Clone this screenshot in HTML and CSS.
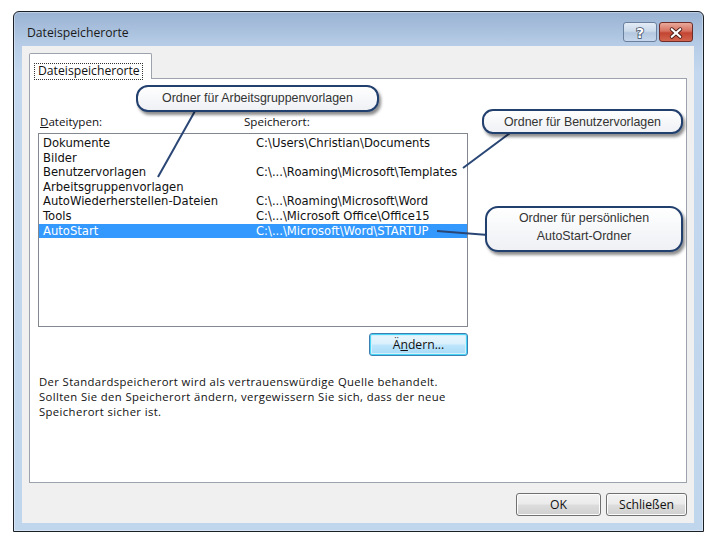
FILE: index.html
```html
<!DOCTYPE html>
<html lang="de">
<head>
<meta charset="utf-8">
<title>Dateispeicherorte</title>
<link rel="stylesheet" href="styles.css">
</head>
<body>
<div class="window">
  <div class="titlebar">
    <span class="title">Dateispeicherorte</span>
    <div class="caption-btns">
      <div class="cbtn help">
        <svg width="34" height="20" viewBox="0 0 34 20"><text x="17" y="15" class="qmark">?</text></svg>
      </div>
      <div class="cbtn close">
        <svg width="34" height="20" viewBox="0 0 34 20">
          <path d="M12.5 6 L21.5 14 M21.5 6 L12.5 14" stroke="#4a1a16" stroke-width="4.2" stroke-linecap="round"/>
          <path d="M12.5 6 L21.5 14 M21.5 6 L12.5 14" stroke="#ffffff" stroke-width="2.4" stroke-linecap="round"/>
        </svg>
      </div>
    </div>
  </div>
  <div class="client">
    <div class="tabs">
      <div class="tab"><span class="tab-label">Dateispeicherorte</span></div>
    </div>
    <div class="panel">
      <div class="headers">
        <span class="h1"><u>D</u>ateitypen:</span>
        <span class="h2">Speicherort:</span>
      </div>
      <div class="list">
        <div class="row"><span class="c1">Dokumente</span><span class="c2">C:\Users\Christian\Documents</span></div>
        <div class="row"><span class="c1">Bilder</span><span class="c2"></span></div>
        <div class="row"><span class="c1">Benutzervorlagen</span><span class="c2">C:\...\Roaming\Microsoft\Templates</span></div>
        <div class="row"><span class="c1">Arbeitsgruppenvorlagen</span><span class="c2"></span></div>
        <div class="row"><span class="c1">AutoWiederherstellen-Dateien</span><span class="c2">C:\...\Roaming\Microsoft\Word</span></div>
        <div class="row"><span class="c1">Tools</span><span class="c2">C:\...\Microsoft Office\Office15</span></div>
        <div class="row selected"><span class="c1">AutoStart</span><span class="c2">C:\...\Microsoft\Word\STARTUP</span></div>
      </div>
      <div class="btn-row">
        <button class="btn btn-focus">Ä<u>n</u>dern...</button>
      </div>
      <div class="note">
        <div class="note-line">Der Standardspeicherort wird als vertrauenswürdige Quelle behandelt.</div>
        <div class="note-line">Sollten Sie den Speicherort ändern, vergewissern Sie sich, dass der neue</div>
        <div class="note-line">Speicherort sicher ist.</div>
      </div>
    </div>
    <div class="footer">
      <button class="btn btn-ok">OK</button>
      <button class="btn btn-close">Schließen</button>
    </div>
  </div>
</div>

<svg class="callouts" width="714" height="540" viewBox="0 0 714 540">
  <defs>
    <filter id="sh" x="-20%" y="-40%" width="140%" height="190%">
      <feDropShadow dx="2" dy="3" stdDeviation="1.8" flood-color="#000" flood-opacity="0.45"/>
    </filter>
    <linearGradient id="cf" x1="0" y1="0" x2="0" y2="1">
      <stop offset="0" stop-color="#ffffff"/>
      <stop offset="1" stop-color="#eef0f4"/>
    </linearGradient>
  </defs>
  <g class="pointer">
    <line x1="195" y1="111" x2="158" y2="177"/>
    <line x1="510" y1="133" x2="463" y2="168"/>
    <line x1="437" y1="231" x2="488" y2="235"/>
  </g>
  <g class="bubble" filter="url(#sh)">
    <rect x="137" y="86" width="241" height="25" rx="11"/>
    <rect x="483" y="110" width="199" height="23" rx="10"/>
    <rect x="486" y="207" width="196" height="44" rx="12"/>
  </g>
  <g class="ctext">
    <text x="257.5" y="102">Ordner für Arbeitsgruppenvorlagen</text>
    <text x="582.5" y="126">Ordner für Benutzervorlagen</text>
    <text x="584" y="222">Ordner für persönlichen</text>
    <text x="584" y="240">AutoStart-Ordner</text>
  </g>
</svg>
</body>
</html>
```

FILE: styles.css
```css
* { box-sizing: border-box; }

html, body {
  margin: 0;
  padding: 0;
  background: #ffffff;
}

body {
  width: 714px;
  height: 540px;
  position: relative;
  overflow: hidden;
  font-family: "Open Sans", "DejaVu Sans", sans-serif;
  color: #111;
}

.window {
  margin: 11px 0 0 13px;
  width: 691px;
  height: 521px;
  border: 1px solid #1b1f26;
  border-radius: 6px 6px 0 0;
  background: linear-gradient(to bottom, #9ab3d3 0px, #b7cde7 34px, #c3d8ee 60px, #c0d6ed 100%);
  padding: 0 9px 8px 8px;
  display: flex;
  flex-direction: column;
  box-shadow: inset 0 0 0 1px rgba(255,255,255,0.35);
}

.titlebar {
  height: 34px;
  display: flex;
  align-items: flex-start;
  justify-content: space-between;
  padding: 0 1px 0 5px;
}

.title {
  font-family: "Open Sans", sans-serif;
  font-size: 12.2px;
  line-height: 14px;
  margin-top: 14px;
  color: #1a1a1a;
}

.caption-btns {
  display: flex;
  gap: 2px;
  margin-top: 10px;
}

.cbtn {
  width: 34px;
  height: 20px;
  border-radius: 3px;
  display: flex;
}

.cbtn svg { display: block; }

.help {
  border: 1px solid #6b809d;
  background: linear-gradient(to bottom, #e3ecf7 0%, #cbd9ea 45%, #b3c7df 55%, #c6d7ec 100%);
}

.close {
  border: 1px solid #6e2d28;
  background: linear-gradient(to bottom, #e9a99b 0%, #d6705f 45%, #c24532 55%, #d3654f 100%);
}

.qmark {
  font-family: "DejaVu Sans", sans-serif;
  font-weight: bold;
  font-size: 15px;
  text-anchor: middle;
  fill: #ffffff;
  stroke: #3a4a62;
  stroke-width: 1.6px;
  paint-order: stroke;
}

.client {
  flex: 1;
  background: #f0f0f0;
  padding: 7px 7px 7px 7px;
  display: flex;
  flex-direction: column;
}

.tabs {
  display: flex;
  height: 25px;
  position: relative;
  z-index: 1;
}

.tab {
  width: 123px;
  height: 26px;
  background: #ffffff;
  border: 1px solid #9da3ad;
  border-bottom: none;
  border-radius: 2px 2px 0 0;
  padding: 4px 0 0 4px;
}

.tab-label {
  display: inline-block;
  border: 1px dotted #333;
  font-size: 12.2px;
  line-height: 14px;
  padding: 0 2px 1px 3px;
  color: #111;
}

.panel {
  height: 405px;
  background: #ffffff;
  border: 1px solid #9da3ad;
  padding: 36px 0 0 8px;
  font-size: 11.6px;
}

.headers {
  display: flex;
  line-height: 14px;
  height: 14px;
  padding-left: 2px;
  margin-bottom: 4px;
}

.h1 { width: 204px; }

.list {
  width: 430px;
  height: 194px;
  border: 1px solid #828790;
  padding-top: 2px;
  font-family: "DejaVu Sans", sans-serif;
  font-size: 11.6px;
}

.row {
  display: flex;
  height: 14.6px;
  line-height: 14.6px;
  padding-left: 4px;
  white-space: nowrap;
  color: #111;
}

.row .c1 { width: 213px; }

.row.selected {
  background: #3399ff;
  color: #ffffff;
}

.btn-row {
  width: 430px;
  display: flex;
  justify-content: flex-end;
  margin-top: 6px;
}

.btn {
  font-family: "Open Sans", sans-serif;
  font-size: 12.2px;
  height: 23px;
  padding: 0;
  border: 1px solid #707070;
  border-radius: 3px;
  background: linear-gradient(to bottom, #f2f2f2 0%, #ebebeb 48%, #dddddd 52%, #cfcfcf 100%);
  color: #111;
  box-shadow: inset 0 0 0 1px #fcfcfc;
}

.btn-focus {
  width: 99px;
  border-color: #3c7fb1;
  box-shadow: inset 0 0 0 1px #48d6f7, inset 0 0 0 2px #d4eefa;
  background: linear-gradient(to bottom, #eaf6fd 0%, #d9f0fc 48%, #bee6fd 52%, #a7d9f5 100%);
}

.note {
  margin: 18px 0 0 1px;
  font-size: 11.3px;
  letter-spacing: 0.38px;
  color: #111;
}

.note-line {
  height: 15.2px;
  line-height: 15.2px;
  white-space: nowrap;
}

.footer {
  display: flex;
  justify-content: flex-end;
  gap: 5px;
  margin-top: 10px;
}

.btn-ok { width: 85px; }
.btn-close { width: 81px; }

.callouts {
  position: absolute;
  left: 0;
  top: 0;
  pointer-events: none;
}

.pointer line {
  stroke: #2a4675;
  stroke-width: 2;
}

.bubble rect {
  fill: url(#cf);
  stroke: #233f6e;
  stroke-width: 2;
}

.ctext text {
  font-family: "Liberation Sans", Arial, sans-serif;
  font-size: 12.4px;
  fill: #333333;
  text-anchor: middle;
}
```
